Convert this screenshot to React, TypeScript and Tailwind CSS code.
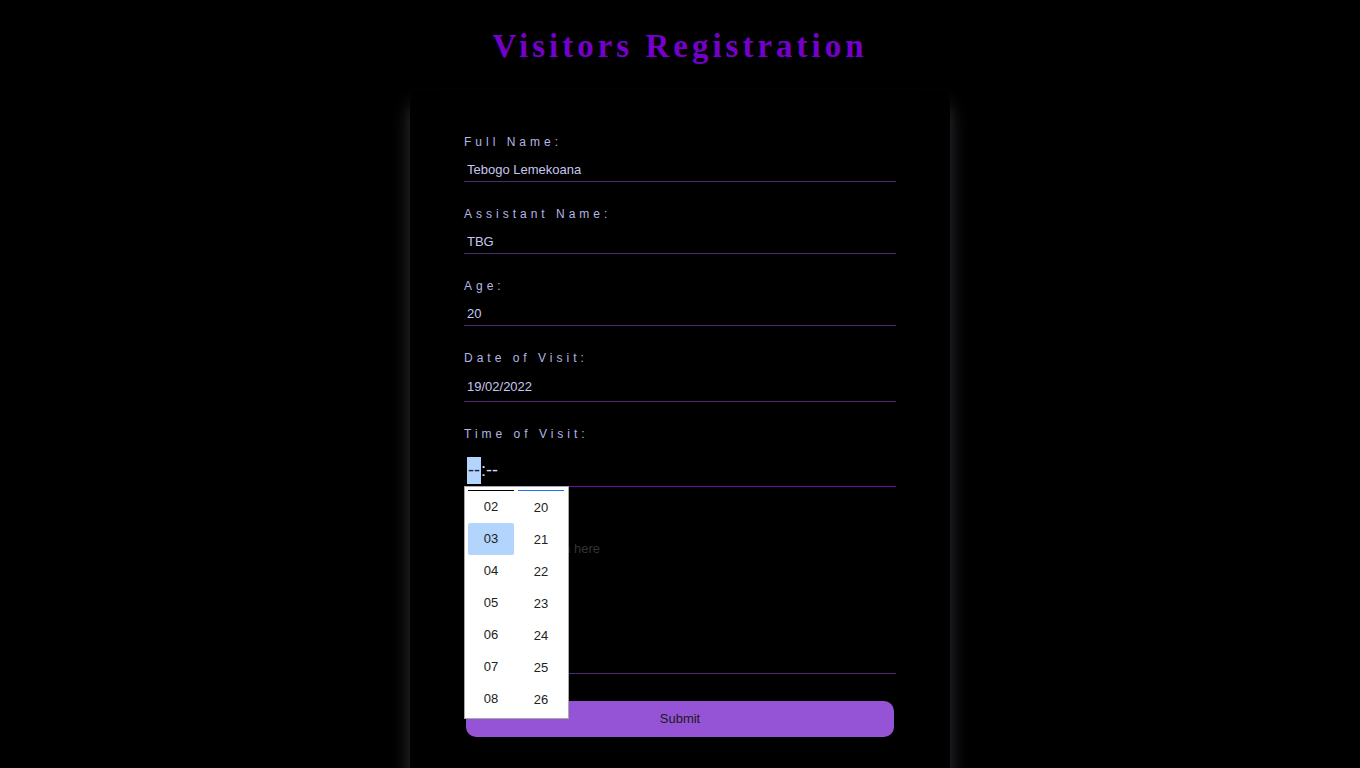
import { useState } from "react";

const hours = ["02", "03", "04", "05", "06", "07", "08"];
const minutes = ["20", "21", "22", "23", "24", "25", "26"];

function Field({ label, value, tall }: { label: string; value: string; tall?: boolean }) {
  return (
    <div className="mb-[24px]">
      <label className="block h-4 text-[12px] leading-4 tracking-[4px] text-[#b3b6e3]">{label}</label>
      <div
        className={
          "mt-[9px] flex border-b border-[#4f2a76] pl-[3px] text-[13px] text-[#c6c6ef] " +
          (tall ? "h-[27px] items-end pb-[5px]" : "h-[23px] items-center")
        }
      >
        {value}
      </div>
    </div>
  );
}

function TimePicker() {
  const [hour, setHour] = useState("03");
  return (
    <div className="absolute left-0 top-full z-50 h-[233px] w-[105px] overflow-hidden border border-[#a9a9a9] bg-white px-[3px] pt-[3px]">
      <div className="flex gap-[4px]">
        <div className="w-[46px]">
          <div className="h-px bg-black" />
          {hours.map(h => (
            <div
              key={h}
              onClick={() => setHour(h)}
              className={
                "flex h-[32px] items-center justify-center rounded-[2px] text-[13px] text-[#222] " +
                (h === hour ? "bg-[#b3d4fc]" : "")
              }
            >
              {h}
            </div>
          ))}
        </div>
        <div className="w-[46px]">
          <div className="h-px bg-[#1a73e8]" />
          {minutes.map(m => (
            <div key={m} className="flex h-[32px] items-center justify-center pt-[2px] text-[13px] text-[#222]">
              {m}
            </div>
          ))}
        </div>
      </div>
    </div>
  );
}

export default function App() {
  return (
    <div className="min-h-[768px] overflow-hidden bg-black font-['Liberation_Sans',Arial,sans-serif]">
      <h1 className="pt-[26px] text-center font-['Liberation_Serif','Times_New_Roman',serif] text-[33px] font-bold leading-[40px] tracking-[4px] text-[#7500cc]">
        Visitors Registration
      </h1>

      <div className="mx-auto mt-[24px] h-[720px] w-[540px] rounded-[10px] bg-black px-[54px] pt-[44px] shadow-[0_14px_18px_rgba(150,150,170,0.35)]">
        <Field label="Full Name:" value="Tebogo Lemekoana" />
        <Field label="Assistant Name:" value="TBG" />
        <Field label="Age:" value="20" />
        <Field label="Date of Visit:" value="19/02/2022" tall />

        <div className="mb-[24px]">
          <label className="block h-4 text-[12px] leading-4 tracking-[4px] text-[#b3b6e3]">Time of Visit:</label>
          <div className="relative mt-[9px] flex h-[36px] items-center border-b border-[#6a0dad] pl-[3px] pt-[3px] text-[18px] text-[#d6d6f5]">
            <span className="bg-[#b3d4fc] px-px text-[#222]">--</span>
            <span>:</span>
            <span>--</span>
            <TimePicker />
          </div>
        </div>

        <div>
          <label className="block h-4 text-[12px] leading-4 tracking-[4px] text-[#b3b6e3]">Purpose:</label>
          <textarea
            readOnly
            placeholder="Enter your reason here"
            className="mt-[9px] block h-[138px] w-full resize-none border-b border-[#4f2a76] bg-transparent px-[3px] pt-[3px] text-[13px] text-[#c6c6ef] outline-none placeholder:text-[#333]"
          />
        </div>

        <button className="mx-[2px] mt-[27px] block h-[36px] w-[428px] rounded-[10px] bg-[#9553d6] text-[13px] text-[#1a1a1a]">
          Submit
        </button>
      </div>
    </div>
  );
}
